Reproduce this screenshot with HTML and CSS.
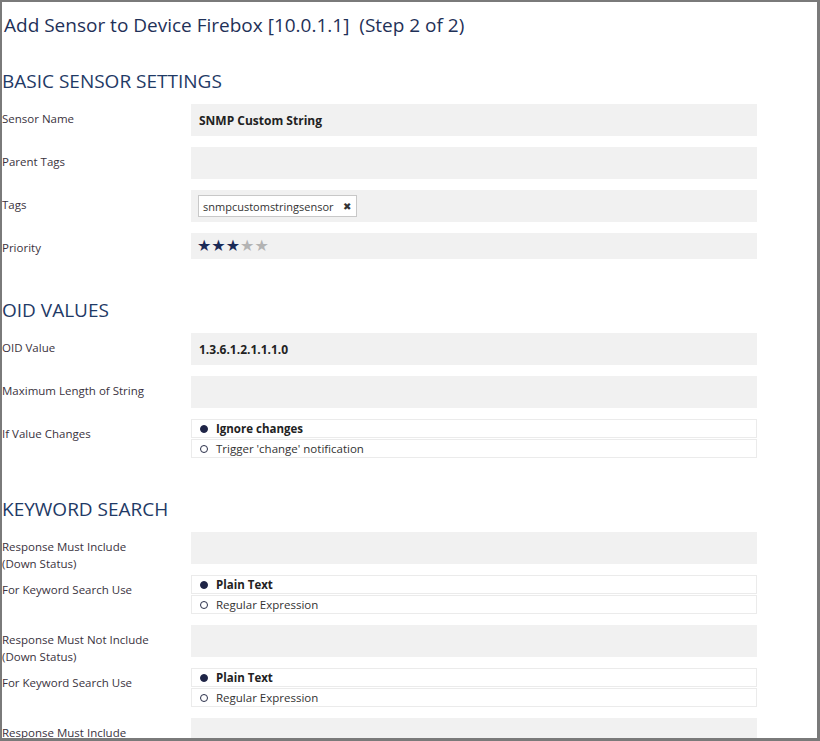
FILE: index.html
```html
<!DOCTYPE html>
<html>
<head>
<meta charset="utf-8">
<link rel="stylesheet" href="styles.css">
</head>
<body>
<div class="frame">
  <h1 class="title">Add Sensor to Device Firebox [10.0.1.1]&nbsp; (Step 2 of 2)</h1>

  <h2 class="section first">BASIC SENSOR SETTINGS</h2>
  <div class="row">
    <div class="label">Sensor Name</div>
    <div class="field"><span class="value">SNMP Custom String</span></div>
  </div>
  <div class="row">
    <div class="label">Parent Tags</div>
    <div class="field"></div>
  </div>
  <div class="row">
    <div class="label">Tags</div>
    <div class="field"><span class="chip">snmpcustomstringsensor<span class="x">&#10006;</span></span></div>
  </div>
  <div class="row">
    <div class="label">Priority</div>
    <div class="field short"><span class="stars"><span class="on">★★★</span><span class="off">★★</span></span></div>
  </div>

  <h2 class="section">OID VALUES</h2>
  <div class="row">
    <div class="label">OID Value</div>
    <div class="field"><span class="value">1.3.6.1.2.1.1.1.0</span></div>
  </div>
  <div class="row">
    <div class="label">Maximum Length of String</div>
    <div class="field"></div>
  </div>
  <div class="row">
    <div class="label">If Value Changes</div>
    <div class="radios">
      <div class="opt checked"><span class="dot"></span>Ignore changes</div>
      <div class="opt"><span class="dot"></span>Trigger 'change' notification</div>
    </div>
  </div>

  <h2 class="section">KEYWORD SEARCH</h2>
  <div class="row">
    <div class="label">Response Must Include<br>(Down Status)</div>
    <div class="field"></div>
  </div>
  <div class="row">
    <div class="label">For Keyword Search Use</div>
    <div class="radios">
      <div class="opt checked"><span class="dot"></span>Plain Text</div>
      <div class="opt"><span class="dot"></span>Regular Expression</div>
    </div>
  </div>
  <div class="row">
    <div class="label">Response Must Not Include<br>(Down Status)</div>
    <div class="field"></div>
  </div>
  <div class="row">
    <div class="label">For Keyword Search Use</div>
    <div class="radios">
      <div class="opt checked"><span class="dot"></span>Plain Text</div>
      <div class="opt"><span class="dot"></span>Regular Expression</div>
    </div>
  </div>
  <div class="row">
    <div class="label">Response Must Include</div>
    <div class="field"></div>
  </div>
</div>
</body>
</html>
```

FILE: styles.css
```css
html, body {
  margin: 0;
  padding: 0;
  background: #ffffff;
}
.frame {
  box-sizing: border-box;
  width: 820px;
  height: 741px;
  overflow: hidden;
  border-style: solid;
  border-color: #7a7a7a;
  border-width: 2px 3px 3px 2px;
  font-family: "Open Sans", "Noto Sans", sans-serif;
  color: #333333;
}
.title {
  margin: 11px 0 0 2px;
  font-size: 19px;
  line-height: 24px;
  font-weight: 400;
  color: #1f3158;
  white-space: nowrap;
}
.section {
  margin: 39px 0 11px 0;
  font-size: 19px;
  line-height: 24px;
  font-weight: 400;
  color: #1f3a66;
}
.section.first {
  margin-top: 32px;
}
.row {
  display: grid;
  grid-template-columns: 189px 566px;
  margin-bottom: 11px;
}
.label {
  font-size: 11.5px;
  line-height: 17px;
  padding-top: 6px;
  margin-bottom: -8px;
  color: #3a3340;
}
.field {
  box-sizing: border-box;
  height: 32px;
  background: #f1f1f1;
  display: flex;
  align-items: center;
  padding: 0 8px;
}
.field.short {
  height: 26px;
  padding-left: 6px;
}
.value {
  font-weight: 700;
  font-size: 12px;
  color: #222222;
}
.chip {
  display: inline-flex;
  align-items: center;
  box-sizing: border-box;
  height: 22px;
  margin-left: -1px;
  padding: 0 5px 0 4px;
  border: 1px solid #c8c8c8;
  background: #ffffff;
  font-size: 11px;
  color: #333333;
}
.chip .x {
  margin-left: 9px;
  font-size: 10px;
  color: #333333;
}
.stars {
  font-size: 16px;
  line-height: 20px;
  font-family: "DejaVu Sans", sans-serif;
}
.stars .on { color: #1a2a57; }
.stars .off { color: #b3b3b3; }
.radios {
  display: flex;
  flex-direction: column;
  gap: 1px;
}
.opt {
  box-sizing: border-box;
  height: 19px;
  border: 1px solid #ebebeb;
  display: flex;
  align-items: center;
  padding-left: 8px;
  font-size: 11.5px;
  color: #333333;
}
.opt.checked {
  font-weight: 700;
  color: #222222;
}
.dot {
  box-sizing: border-box;
  width: 8px;
  height: 8px;
  border-radius: 50%;
  border: 1.5px solid #2a2f4a;
  margin-right: 8px;
  flex: none;
}
.opt.checked .dot {
  background: #1f2547;
  border-color: #1f2547;
}
```
